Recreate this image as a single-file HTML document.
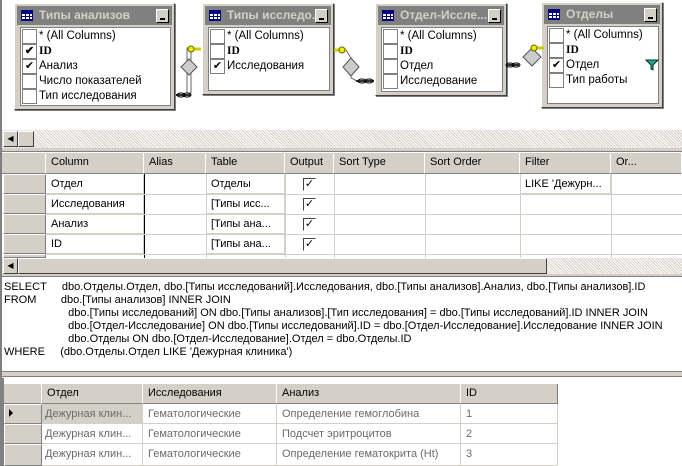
<!DOCTYPE html>
<html><head><meta charset="utf-8"><style>
*{margin:0;padding:0;box-sizing:border-box}
body{width:682px;height:466px;overflow:hidden;background:#fff;font-family:"Liberation Sans","DejaVu Sans",sans-serif;font-size:11px;color:#000;position:relative}
.a{position:absolute}
.box{position:absolute;background:#d4d0c8;border:1px solid #fff;border-right-color:#404040;border-bottom-color:#404040;box-shadow:1px 1px 0 #808080}
.tb{position:absolute;left:2px;right:2px;top:2px;height:19px;background:#808080;color:#d4d0c8;font-weight:bold;font-size:12px;padding:2px 0 0 22px;white-space:nowrap;overflow:hidden}
.ti{position:absolute;left:4px;top:4px;width:12px;height:11px;background:#fff;border:1px solid #000080;background-image:linear-gradient(#000080 0 2px,transparent 2px),repeating-linear-gradient(90deg,transparent 0 3px,#000080 3px 4px),repeating-linear-gradient(transparent 0 2px,#000080 2px 3px)}
.mn{position:absolute;right:3px;top:3px;width:13px;height:14px;background:#d4d0c8;border:1px solid #fff;border-right-color:#000;border-bottom-color:#000}
.mn:after{content:"";position:absolute;left:3px;top:8px;width:5px;height:2px;background:#000}
.in{position:absolute;left:5px;right:3px;top:23px;bottom:3px;background:#fff;border:1px solid #808080}
.r{position:absolute;left:0;height:15px;padding-left:18px;line-height:15px;font-size:11.5px;white-space:nowrap;overflow:hidden}
.cb{position:absolute;left:1px;top:0;width:15px;height:15px;border:1px solid #808080;background:#fff;font-size:11px;line-height:12px;text-align:center}
.hatch{background-color:#ece9e0;background-image:repeating-linear-gradient(45deg,#d4d0c8 0 1px,#fff 1px 2px)}
.btn{position:absolute;background:#d4d0c8;border:1px solid #fff;border-right-color:#404040;border-bottom-color:#404040}
.gh{position:absolute;background:#d4d0c8;border-right:1px solid #fff;border-bottom:1px solid #808080;padding:3px 0 0 5px;white-space:nowrap}
.gc{position:absolute;border-right:1px solid #d4d0c8;border-bottom:1px solid #d4d0c8;padding:4px 0 0 5px;white-space:nowrap;overflow:hidden}
.rh{position:absolute;background:#d4d0c8;border:1px solid #fff;border-right-color:#808080;border-bottom-color:#808080}
.ck{position:absolute;width:13px;height:13px;border:1px solid #404040;border-right-color:#fff;border-bottom-color:#fff;background:#fff;font-size:11px;font-weight:bold;line-height:11px;text-align:center}
.sql{position:absolute;left:4px;font-size:11px;white-space:pre}
.res{color:#6a6a6a}
</style></head><body>
<div class="a" style="left:0;top:0;width:2px;height:466px;background:#808080"></div>

<div class="box" style="left:14px;top:3px;width:161px;height:107px">
<div class="tb"><div class="ti"></div>Типы анализов<div class="mn"></div></div>
<div class="in">
<div class="r" style="top:1px"><span class="cb"></span>* (All Columns)</div>
<div class="r" style="top:16px;font-family:'Liberation Serif',serif;font-weight:bold"><span class="cb">✔</span>ID</div>
<div class="r" style="top:31px"><span class="cb">✔</span>Анализ</div>
<div class="r" style="top:46px"><span class="cb"></span>Число показателей</div>
<div class="r" style="top:61px"><span class="cb"></span>Тип исследования</div>
</div></div>

<div class="box" style="left:202px;top:3px;width:132px;height:92px">
<div class="tb"><div class="ti"></div>Типы исследо...<div class="mn"></div></div>
<div class="in">
<div class="r" style="top:1px"><span class="cb"></span>* (All Columns)</div>
<div class="r" style="top:16px;font-family:'Liberation Serif',serif;font-weight:bold"><span class="cb"></span>ID</div>
<div class="r" style="top:31px"><span class="cb">✔</span>Исследования</div>
</div></div>

<div class="box" style="left:375px;top:3px;width:132px;height:93px">
<div class="tb"><div class="ti"></div>Отдел-Иссле...<div class="mn"></div></div>
<div class="in">
<div class="r" style="top:1px"><span class="cb"></span>* (All Columns)</div>
<div class="r" style="top:16px;font-family:'Liberation Serif',serif;font-weight:bold"><span class="cb"></span>ID</div>
<div class="r" style="top:31px"><span class="cb"></span>Отдел</div>
<div class="r" style="top:46px"><span class="cb"></span>Исследование</div>
</div></div>

<div class="box" style="left:541px;top:2px;width:122px;height:106px">
<div class="tb"><div class="ti"></div>Отделы<div class="mn"></div></div>
<div class="in">
<div class="r" style="top:1px;width:95px"><span class="cb"></span>* (All Columns)</div>
<div class="r" style="top:16px;font-family:'Liberation Serif',serif;font-weight:bold"><span class="cb"></span>ID</div>
<div class="r" style="top:31px"><span class="cb">✔</span>Отдел</div>
<div class="r" style="top:46px"><span class="cb"></span>Тип работы</div>
<svg class="a" style="left:97px;top:32px" width="14" height="12"><path d="M1 1h12l-5 5v5l-2-1V6z" fill="#2a8" stroke="#033" stroke-width="1"/></svg>
</div></div>

<svg class="a" style="left:170px;top:40px" width="40" height="60">
<rect x="17" y="8" width="4" height="45" fill="#fff" stroke="#666"/>
<path d="M19 19l8 8-8 8-8-8z" fill="#ccc" stroke="#555"/>
<path d="M19 9h12" stroke="#cc0" stroke-width="3"/><circle cx="21" cy="9" r="3" fill="#ee0" stroke="#660"/>
<path d="M6 55h15" stroke="#333" stroke-width="2"/><ellipse cx="11" cy="55" rx="4" ry="2" fill="none" stroke="#000"/><ellipse cx="17" cy="55" rx="4" ry="2" fill="none" stroke="#000"/>
</svg>
<svg class="a" style="left:334px;top:40px" width="45" height="50">
<path d="M0 10h12 M12 10l5 8v20l6 3" stroke="#666" fill="none"/>
<path d="M17 18l8 9-8 9-8-9z" fill="#ccc" stroke="#555"/>
<path d="M0 10h12" stroke="#cc0" stroke-width="3"/><circle cx="8" cy="10" r="3" fill="#ee0" stroke="#660"/>
<path d="M22 41h18" stroke="#333" stroke-width="2"/><ellipse cx="28" cy="41" rx="4" ry="2" fill="none" stroke="#000"/><ellipse cx="35" cy="41" rx="4" ry="2" fill="none" stroke="#000"/>
</svg>
<svg class="a" style="left:505px;top:40px" width="40" height="30">
<path d="M2 25h12" stroke="#333" stroke-width="2"/><ellipse cx="5" cy="25" rx="4" ry="2" fill="none" stroke="#000"/><ellipse cx="11" cy="25" rx="4" ry="2" fill="none" stroke="#000"/>
<path d="M27 8l9 9-9 9-9-9z" fill="#ccc" stroke="#555"/>
<path d="M27 8h12" stroke="#cc0" stroke-width="3"/><circle cx="29" cy="8" r="3" fill="#ee0" stroke="#660"/>
</svg>

<div class="a hatch" style="left:2px;top:130px;width:680px;height:18px"></div>
<div class="btn" style="left:3px;top:131px;width:15px;height:16px;font-size:8px;text-align:center;line-height:14px">◀</div>
<div class="btn" style="left:18px;top:131px;width:16px;height:16px"></div>
<div class="a" style="left:2px;top:148px;width:680px;height:4px;background:#d4d0c8;border-bottom:1px solid #808080"></div>

<div class="a" style="left:2px;top:153px;width:680px;height:105px;background:#fff"></div>
<div class="gh" style="left:2px;top:153px;width:44px;height:21px"></div>
<div class="gh" style="left:46px;top:153px;width:98px;height:21px">Column</div>
<div class="gh" style="left:144px;top:153px;width:62px;height:21px">Alias</div>
<div class="gh" style="left:206px;top:153px;width:79px;height:21px">Table</div>
<div class="gh" style="left:285px;top:153px;width:49px;height:21px">Output</div>
<div class="gh" style="left:334px;top:153px;width:91px;height:21px">Sort Type</div>
<div class="gh" style="left:425px;top:153px;width:95px;height:21px">Sort Order</div>
<div class="gh" style="left:520px;top:153px;width:91px;height:21px">Filter</div>
<div class="gh" style="left:611px;top:153px;width:71px;height:21px">Or...</div>

<div class="rh" style="left:3px;top:174px;width:43px;height:20px"></div>
<div class="rh" style="left:3px;top:194px;width:43px;height:20px"></div>
<div class="rh" style="left:3px;top:214px;width:43px;height:20px"></div>
<div class="rh" style="left:3px;top:234px;width:43px;height:20px"></div>
<div class="rh" style="left:3px;top:254px;width:43px;height:4px"></div>

<div class="gc" style="left:46px;top:174px;width:98px;height:20px">Отдел</div>
<div class="gc" style="left:46px;top:194px;width:98px;height:20px">Исследования</div>
<div class="gc" style="left:46px;top:214px;width:98px;height:20px">Анализ</div>
<div class="gc" style="left:46px;top:234px;width:98px;height:20px">ID</div>
<div class="a" style="left:144px;top:174px;width:1px;height:84px;background:#000"></div>
<div class="gc" style="left:206px;top:174px;width:79px;height:20px">Отделы</div>
<div class="gc" style="left:206px;top:194px;width:79px;height:20px">[Типы исс...</div>
<div class="gc" style="left:206px;top:214px;width:79px;height:20px">[Типы ана...</div>
<div class="gc" style="left:206px;top:234px;width:79px;height:20px">[Типы ана...</div>
<div class="gc" style="left:520px;top:174px;width:91px;height:20px">LIKE 'Дежурн...</div>
<div class="a" style="left:206px;top:174px;width:1px;height:84px;background:#d4d0c8"></div>
<div class="a" style="left:285px;top:174px;width:1px;height:84px;background:#d4d0c8"></div>
<div class="a" style="left:334px;top:174px;width:1px;height:84px;background:#d4d0c8"></div>
<div class="a" style="left:425px;top:174px;width:1px;height:84px;background:#d4d0c8"></div>
<div class="a" style="left:520px;top:174px;width:1px;height:84px;background:#d4d0c8"></div>
<div class="a" style="left:611px;top:174px;width:1px;height:84px;background:#d4d0c8"></div>
<div class="a" style="left:46px;top:194px;width:636px;height:1px;background:#d4d0c8"></div>
<div class="a" style="left:46px;top:214px;width:636px;height:1px;background:#d4d0c8"></div>
<div class="a" style="left:46px;top:234px;width:636px;height:1px;background:#d4d0c8"></div>
<div class="a" style="left:46px;top:254px;width:636px;height:1px;background:#d4d0c8"></div>
<div class="ck" style="left:303px;top:178px">✓</div>
<div class="ck" style="left:303px;top:198px">✓</div>
<div class="ck" style="left:303px;top:218px">✓</div>
<div class="ck" style="left:303px;top:238px">✓</div>

<div class="a hatch" style="left:2px;top:258px;width:680px;height:16px"></div>
<div class="btn" style="left:3px;top:258px;width:15px;height:16px;font-size:8px;text-align:center;line-height:14px">◀</div>
<div class="btn" style="left:18px;top:258px;width:529px;height:16px"></div>
<div class="a" style="left:2px;top:274px;width:680px;height:3px;background:#d4d0c8;border-bottom:1px solid #808080"></div>

<div class="sql" style="top:281px">SELECT     dbo.Отделы.Отдел, dbo.[Типы исследований].Исследования, dbo.[Типы анализов].Анализ, dbo.[Типы анализов].ID</div>
<div class="sql" style="top:294px">FROM        dbo.[Типы анализов] INNER JOIN</div>
<div class="sql" style="top:307px">                     dbo.[Типы исследований] ON dbo.[Типы анализов].[Тип исследования] = dbo.[Типы исследований].ID INNER JOIN</div>
<div class="sql" style="top:320px">                     dbo.[Отдел-Исследование] ON dbo.[Типы исследований].ID = dbo.[Отдел-Исследование].Исследование INNER JOIN</div>
<div class="sql" style="top:333px">                     dbo.Отделы ON dbo.[Отдел-Исследование].Отдел = dbo.Отделы.ID</div>
<div class="sql" style="top:346px">WHERE     (dbo.Отделы.Отдел LIKE 'Дежурная клиника')</div>

<div class="a" style="left:2px;top:371px;width:680px;height:6px;background:#d4d0c8;border-top:1px solid #808080;border-bottom:1px solid #808080"></div>

<div class="a" style="left:2px;top:378px;width:2px;height:88px;background:#808080"></div>
<div class="gh" style="left:4px;top:384px;width:38px;height:20px"></div>
<div class="gh" style="left:42px;top:384px;width:101px;height:20px">Отдел</div>
<div class="gh" style="left:143px;top:384px;width:134px;height:20px">Исследования</div>
<div class="gh" style="left:277px;top:384px;width:184px;height:20px">Анализ</div>
<div class="gh" style="left:461px;top:384px;width:97px;height:20px;border-right:1px solid #808080">ID</div>
<div class="rh" style="left:4px;top:404px;width:38px;height:20px"></div>
<div class="rh" style="left:4px;top:424px;width:38px;height:20px"></div>
<div class="rh" style="left:4px;top:444px;width:38px;height:22px"></div>
<div class="a" style="left:9px;top:409px;width:0;height:0;border-left:4px solid #000;border-top:4px solid transparent;border-bottom:4px solid transparent"></div>

<div class="gc res" style="left:42px;top:404px;width:101px;height:20px;background:#d4d0c8;padding-left:3px">Дежурная клин...</div>
<div class="gc res" style="left:143px;top:404px;width:134px;height:20px">Гематологические</div>
<div class="gc res" style="left:277px;top:404px;width:184px;height:20px">Определение гемоглобина</div>
<div class="gc res" style="left:461px;top:404px;width:97px;height:20px">1</div>
<div class="gc res" style="left:42px;top:424px;width:101px;height:20px;padding-left:3px">Дежурная клин...</div>
<div class="gc res" style="left:143px;top:424px;width:134px;height:20px">Гематологические</div>
<div class="gc res" style="left:277px;top:424px;width:184px;height:20px">Подсчет эритроцитов</div>
<div class="gc res" style="left:461px;top:424px;width:97px;height:20px">2</div>
<div class="gc res" style="left:42px;top:444px;width:101px;height:22px;padding-left:3px">Дежурная клин...</div>
<div class="gc res" style="left:143px;top:444px;width:134px;height:22px">Гематологические</div>
<div class="gc res" style="left:277px;top:444px;width:184px;height:22px">Определение гематокрита (Ht)</div>
<div class="gc res" style="left:461px;top:444px;width:97px;height:22px">3</div>
</body></html>
